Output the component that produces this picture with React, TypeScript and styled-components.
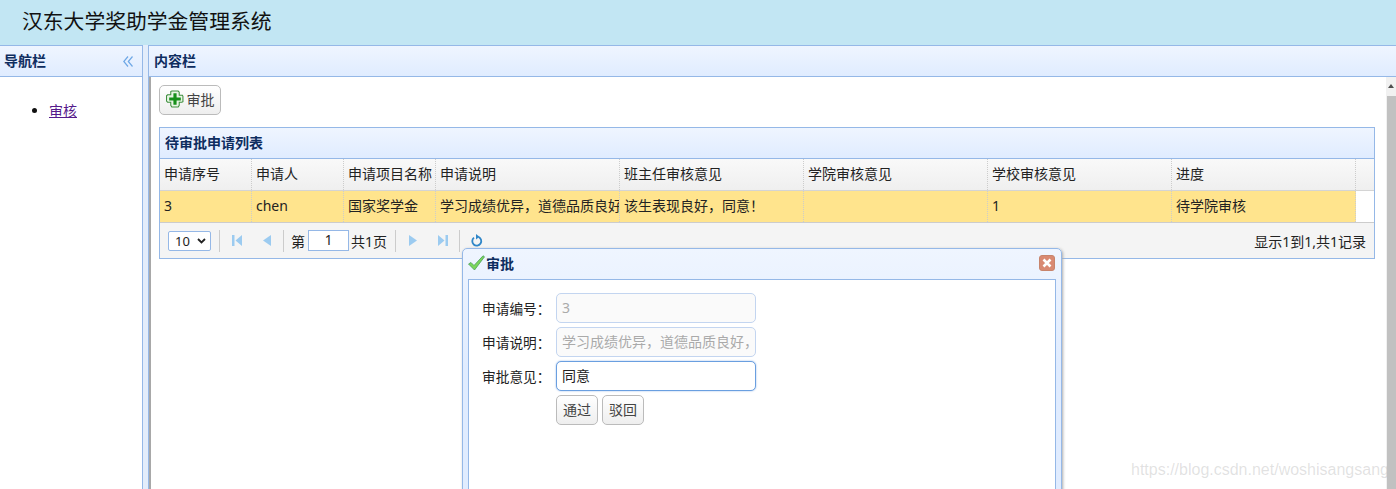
import React from "react";
import styled, { createGlobalStyle } from "styled-components";

const Global = createGlobalStyle`
  html, body { margin: 0; padding: 0; background: #fff; overflow: hidden; }
  body { font-family: "Noto Sans", "Noto Sans CJK SC", sans-serif; color: #111; }
`;
const Page = styled.div`
  position: relative; width: 1396px; height: 489px; overflow: hidden; display: flex; flex-direction: column;
`;
const TopBar = styled.header`
  height: 45px; flex: none; box-sizing: border-box; padding-left: 22px; background: #c2e6f3;
  font-size: 20.8px; line-height: 43px; color: #111;
`;
const Main = styled.div`display: flex; flex: 1; min-height: 0;`;
const NavPanel = styled.aside`
  width: 143px; flex: none; box-sizing: border-box; border-right: 1px solid #95b8e7; display: flex; flex-direction: column;
`;
const PanelHead = styled.div`
  height: 32px; flex: none; box-sizing: border-box; display: flex; align-items: center; justify-content: space-between;
  border-top: 1px solid #95b8e7; border-bottom: 1px solid #95b8e7;
  background: linear-gradient(to bottom, #eff5ff, #e0ecff);
  font-size: 14px; font-weight: 700; color: #0e2d5f; line-height: 30px;
`;
const NavHead = styled(PanelHead)`padding: 0 9px 0 4px;`;
const NavList = styled.ul`margin: 24px 0 0; padding: 0 0 0 49px; font-size: 14px; line-height: 20px;`;
const NavLink = styled.a`color: #551a8b; text-decoration: underline;`;
const Splitter = styled.div`width: 5px; flex: none; background: #e3edfb;`;
const ContentPanel = styled.section`
  flex: 1; min-width: 0; display: flex; flex-direction: column; box-sizing: border-box;
  border-left: 1px solid #95b8e7;
`;
const ContentHead = styled(PanelHead)`padding-left: 5px; margin-left: -1px; border-left: 1px solid #95b8e7;`;
const ContentBody = styled.div`flex: 1; display: flex; min-height: 0; border-left: 2px solid #a8a8a8;`;
const Scroll = styled.div`flex: 1; min-width: 0; padding: 8px 11px 0 8px; box-sizing: border-box; `;
const Track = styled.div`
  width: 10px; flex: none; background: #f1f1f1; display: flex; flex-direction: column; align-items: flex-end;
`;
const Arrow = styled.div`
  height: 19px; width: 10px; flex: none; display: flex; justify-content: center; padding-top: 7px; box-sizing: border-box;
  &::before { content: ""; border-left: 3px solid transparent; border-right: 3px solid transparent; border-bottom: 4px solid #505050; height: 0; }
`;
const Thumb = styled.div`width: 9px; flex: 1; background: #c1c1c1;`;
const Tool = styled.div`display: flex; height: 42px; align-items: flex-start;`;
const LinkButton = styled.button<{ $w: number }>`
  width: ${p => p.$w}px; height: 30px; box-sizing: border-box; padding: 0 0 2px; display: inline-flex; align-items: center; justify-content: center; gap: 3px;
  border: 1px solid #bbb; border-radius: 5px; background: linear-gradient(to bottom, #ffffff, #eeeeee);
  font: 14px "Noto Sans", "Noto Sans CJK SC", sans-serif; color: #444;
`;
const Grid = styled.div`border: 1px solid #95b8e7; width: 1216px; box-sizing: border-box;`;
const GridTitle = styled.div`
  height: 31px; box-sizing: border-box; padding-left: 5px; border-bottom: 1px solid #95b8e7;
  background: linear-gradient(to bottom, #eff5ff, #e0ecff);
  font-size: 14px; font-weight: 700; line-height: 30px; color: #0e2d5f;
`;
const Row = styled.div`display: flex; height: 32px; box-sizing: border-box;`;
const HeadRow = styled(Row)`background: linear-gradient(to bottom, #f9f9f9, #efefef); border-bottom: 1px solid #d4d4d4;`;
const BodyRow = styled(Row)`border-bottom: 1px solid #ccc;`;
const Cell = styled.div<{ $w: number; $fill?: boolean }>`
  width: ${p => p.$w}px; flex: none; box-sizing: border-box; padding-left: 4px; overflow: hidden; white-space: nowrap;
  border-right: 1px dotted #ccc; font-size: 14px; line-height: 30px; color: #222;
  background: ${p => (p.$fill ? "#ffe48d" : "transparent")};
`;
const Pager = styled.div`
  height: 35px; display: flex; align-items: center; background: #f4f4f4; padding-left: 8px; padding-right: 8px;
  font-size: 14px; color: #222;
`;
const PageSize = styled.div`
  width: 43px; height: 20px; box-sizing: border-box; border: 1px solid #95b8e7; border-radius: 2px; background: #fff; font-size: 13px;
  display: flex; align-items: center; justify-content: space-between; padding: 0 4px 0 6px; line-height: 18px; margin-right: 7px;
`;
const Sep = styled.i`width: 1px; height: 22px; background: #ccc; margin: 0 2px 0 1px; flex: none;`;
const IconSlot = styled.span`width: 30px; height: 22px; flex: none; display: flex; align-items: center; justify-content: center;`;
const PageGroup = styled.div`display: flex; align-items: center; margin: 0 7px 0 5px;`;
const PageInput = styled.div`
  width: 41px; height: 21px; margin: 0 2px 0 3px; box-sizing: border-box; border: 1px solid #95b8e7; background: #fff; text-align: center; line-height: 19px; font-size: 13.5px;
`;
const PageInfo = styled.span`margin-left: auto;`;
const Dialog = styled.div`
  position: absolute; left: 462px; top: 248px; width: 600px; height: 300px; box-sizing: border-box;
  border: 1px solid #95b8e7; border-radius: 5px 5px 0 0; padding: 0 5px;
  background: linear-gradient(to bottom, #eff5ff, #e0ecff 40%);
  box-shadow: 1px 1px 3px #aaa;
`;
const DialogHead = styled.div`
  height: 30px; box-sizing: border-box; padding-bottom: 2px; display: flex; align-items: center; font-size: 14px; font-weight: 700; color: #0e2d5f; gap: 1px;
`;
const DialogTitle = styled.span`flex: 1;`;
const DialogBody = styled.div`
  height: 280px; box-sizing: border-box; border: 1px solid #95b8e7; background: #fff; padding: 13px 0 0 13px;
  display: flex; flex-direction: column; gap: 4px;
`;
const FormRow = styled.div`display: flex; align-items: center; height: 30px;`;
const Label = styled.label`width: 74px; flex: none; font-size: 13.7px; color: #222;`;
const Field = styled.div<{ $active?: boolean }>`
  width: 200px; height: 30px; box-sizing: border-box; border-radius: 5px; padding: 0 5px; overflow: hidden; white-space: nowrap;
  border: 1px solid ${p => (p.$active ? "#6a9fe0" : "#c3d5f0")};
  background: ${p => (p.$active ? "#fff" : "#fafafa")};
  box-shadow: ${p => (p.$active ? "0 0 2px #95b8e7" : "none")};
  color: ${p => (p.$active ? "#222" : "#aaa")}; font-size: 14px; line-height: 28px;
`;
const Actions = styled.div`display: flex; gap: 4px; padding-left: 74px;`;
const CloseBtn = styled.span`display: flex; margin-right: 1px;`;
const Watermark = styled.div`
  position: absolute; left: 1131px; top: 461px; width: 256px; overflow: hidden; font: 16px "Liberation Sans", sans-serif; color: rgba(150,150,150,.28); white-space: nowrap;
`;

const Icon = {
  Cross: () => (
    <svg width="18" height="18" viewBox="0 0 17 17">
      <path d="M5.500 1h6l1 1v3h3l.5 1v5l-1 .5h-2.500v3l-1 1.500h-6l-1-1.500v-3h-3l-1-1v-5l1-1h3v-3z" fill="#e8f5e4" stroke="#3f8f3f" strokeWidth="1" />
      <path d="M7 3h3v4h4v3h-4v4h-3v-4h-4v-3h4z" fill="#16901a" />
    </svg>
  ),
  Chevrons: () => (
    <svg width="10" height="11" viewBox="0 0 10 11" fill="none" stroke="#6fa8e6" strokeWidth="1.200">
      <path d="M5 .5 .8 5.500 5 10.500M9.500 .5 5.300 5.500 9.500 10.500" />
    </svg>
  ),
  First: () => (
    <svg width="10" height="13" viewBox="0 0 10 13" fill="#9ccbf0"><path d="M0 1h2.500v11H0zM10 1v11L3.500 6.500z" /></svg>
  ),
  Prev: () => <svg width="8" height="13" viewBox="0 0 8 13" fill="#9ccbf0"><path d="M8 1v11L0 6.500z" /></svg>,
  Next: () => <svg width="8" height="13" viewBox="0 0 8 13" fill="#9ccbf0"><path d="M0 1v11l8-5.500z" /></svg>,
  Last: () => (
    <svg width="10" height="13" viewBox="0 0 10 13" fill="#9ccbf0"><path d="M0 1v11l6.500-5.500zM7.500 1H10v11H7.500z" /></svg>
  ),
  Refresh: () => (
    <svg width="12" height="13" viewBox="0 0 12 13" fill="none">
      <path d="M7.500 3A4.500 4.500 0 1 1 3 3.600" stroke="#2f86c8" strokeWidth="1.800" />
      <path d="M5 0v5.500l3.500-2.700z" fill="#2f86c8" />
    </svg>
  ),
  Check: () => (
    <svg width="17" height="16" viewBox="0 0 17 16">
      <path d="M.5 9l2.500-1.500 3 3L15 .8l1.500 1L6.500 15z" fill="#7bd65a" stroke="#4a9d5a" strokeWidth=".8" />
    </svg>
  ),
  Close: () => (
    <svg width="16" height="16" viewBox="0 0 16 16">
      <rect x=".5" y=".5" width="15" height="15" rx="2.500" fill="#d98a73" stroke="#c7846c" />
      <path d="M4.500 4.500l7 7M11.500 4.500l-7 7" stroke="#fff" strokeWidth="2.600" />
    </svg>
  ),
};

const cols = [92, 92, 92, 184, 184, 184, 184, 184];
const heads = ["申请序号", "申请人", "申请项目名称", "申请说明", "班主任审核意见", "学院审核意见", "学校审核意见", "进度"];
const data = ["3", "chen", "国家奖学金", "学习成绩优异，道德品质良好", "该生表现良好，同意！", "", "1", "待学院审核"];

export default function App() {
  return (
    <Page>
      <Global />
      <TopBar>汉东大学奖助学金管理系统</TopBar>
      <Main>
        <NavPanel>
          <NavHead>导航栏<Icon.Chevrons /></NavHead>
          <NavList>
            <li><NavLink href="#">审核</NavLink></li>
          </NavList>
        </NavPanel>
        <Splitter />
        <ContentPanel>
          <ContentHead>内容栏</ContentHead>
          <ContentBody>
            <Scroll>
              <Tool>
                <LinkButton $w={62}><Icon.Cross />审批</LinkButton>
              </Tool>
              <Grid>
                <GridTitle>待审批申请列表</GridTitle>
                <HeadRow>
                  {heads.map((h, i) => <Cell key={h} $w={cols[i]}>{h}</Cell>)}
                </HeadRow>
                <BodyRow>
                  {data.map((d, i) => <Cell key={i} $w={cols[i]} $fill>{d}</Cell>)}
                </BodyRow>
                <Pager>
                  <PageSize>10<svg width="9" height="6" viewBox="0 0 9 6" fill="none" stroke="#222" strokeWidth="1.800"><path d="M1 1l3.500 3.500L8 1" /></svg></PageSize>
                  <Sep />
                  <IconSlot><Icon.First /></IconSlot>
                  <IconSlot><Icon.Prev /></IconSlot>
                  <Sep />
                  <PageGroup>第<PageInput>1</PageInput>共1页</PageGroup>
                  <Sep />
                  <IconSlot><Icon.Next /></IconSlot>
                  <IconSlot><Icon.Last /></IconSlot>
                  <Sep />
                  <IconSlot><Icon.Refresh /></IconSlot>
                  <PageInfo>显示1到1,共1记录</PageInfo>
                </Pager>
              </Grid>
            </Scroll>
            <Track>
              <Arrow />
              <Thumb />
            </Track>
          </ContentBody>
        </ContentPanel>
      </Main>
      <Dialog>
        <DialogHead>
          <Icon.Check />
          <DialogTitle>审批</DialogTitle>
          <CloseBtn><Icon.Close /></CloseBtn>
        </DialogHead>
        <DialogBody>
          <FormRow><Label>申请编号：</Label><Field>3</Field></FormRow>
          <FormRow><Label>申请说明：</Label><Field>学习成绩优异，道德品质良好，</Field></FormRow>
          <FormRow><Label>审批意见：</Label><Field $active>同意</Field></FormRow>
          <Actions>
            <LinkButton $w={42}>通过</LinkButton>
            <LinkButton $w={42}>驳回</LinkButton>
          </Actions>
        </DialogBody>
      </Dialog>
      <Watermark>https://blog.csdn.net/woshisangsang</Watermark>
    </Page>
  );
}
